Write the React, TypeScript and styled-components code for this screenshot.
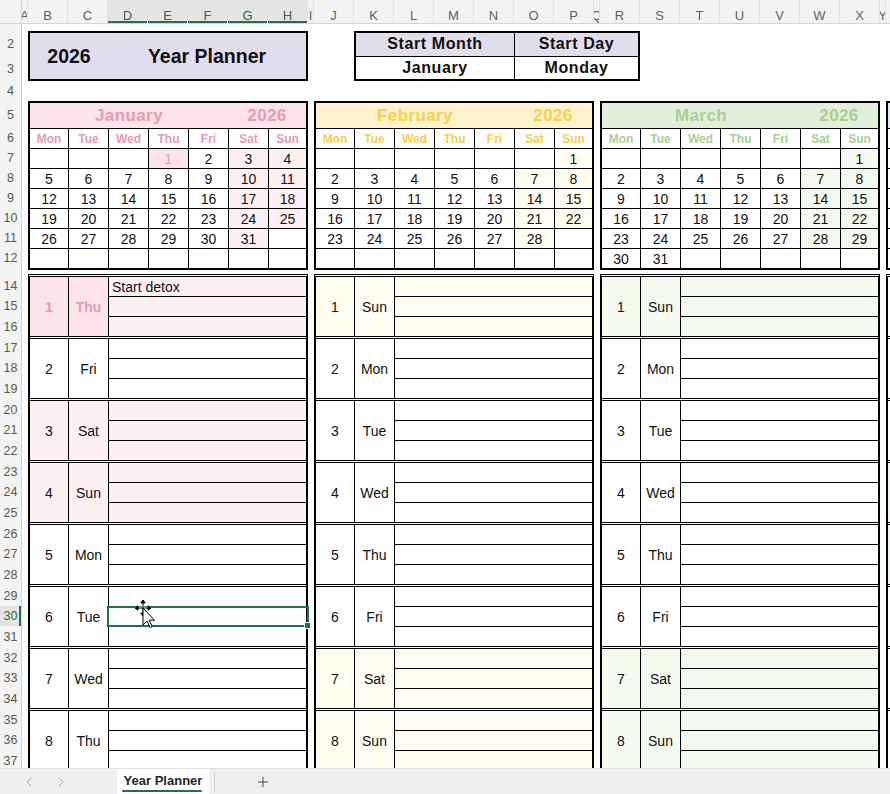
import React from 'react';
import styled, { createGlobalStyle, css } from 'styled-components';
import { ChevronLeft, ChevronRight, Plus } from 'lucide-react';

const GlobalStyle = createGlobalStyle`
  html, body { margin: 0; padding: 0; background: #fff; }
  body { font-family: 'Liberation Sans', Arial, sans-serif; }
  * { box-sizing: border-box; }
`;

type MonthTheme = { name: string; head: string; accent: string; tint: string };

const YEAR = 2026;
const MONTHS: MonthTheme[] = [
  { name: 'January', head: '#fce4ea', accent: '#e99aae', tint: '#fdf0f3' },
  { name: 'February', head: '#fff2cc', accent: '#f4d04e', tint: '#fffdf0' },
  { name: 'March', head: '#e2efda', accent: '#a9d08e', tint: '#f4faf0' },
  { name: 'April', head: '#ddebf7', accent: '#9bc2e6', tint: '#eff5fb' },
];
const DAY_NAMES = ['Mon', 'Tue', 'Wed', 'Thu', 'Fri', 'Sat', 'Sun'];
const HOLIDAYS = ['0-1'];
const NOTES: Record<string, string> = { '0-1': 'Start detox' };
const SELECTED = { month: 0, day: 6, line: 1 };

const LETTERS = 'ABCDEFGHIJKLMNOPQRSTUVWXYZ'.split('');
const NARROW = ['A', 'I', 'Q', 'Y'];
const SELECTED_COLS = ['D', 'E', 'F', 'G', 'H'];

const ROWS: [number, number][] = [
  [1, 7], [2, 25], [3, 25], [4, 20], [5, 27], [6, 20],
  [7, 20], [8, 20], [9, 20], [10, 20], [11, 20], [12, 20], [13, 7],
];
for (let r = 14; r <= 38; r++) {
  const pos = (r - 14) % 3;
  ROWS.push([r, pos === 1 ? 20 : 21]);
}
const SELECTED_ROW = 30;

const firstWeekday = (m: number) => (new Date(YEAR, m, 1).getDay() + 6) % 7;
const daysIn = (m: number) => new Date(YEAR, m + 1, 0).getDate();
const isHoliday = (m: number, d: number) => HOLIDAYS.includes(`${m}-${d}`);

/* ---------- sheet chrome ---------- */

const Page = styled.div`
  width: 890px;
  height: 794px;
  display: flex;
  flex-direction: column;
  overflow: hidden;
  background: #fff;
`;

const Sheet = styled.div`
  flex: 1;
  min-height: 0;
  display: grid;
  grid-template-columns: 22px 1fr;
  grid-template-rows: 24px 1fr;
  overflow: hidden;
`;

const Corner = styled.div`
  background: #f3f3f3;
  border-right: 1px solid #d4d4d4;
  border-bottom: 1px solid #d4d4d4;
`;

const ColHeaderBar = styled.div`
  display: flex;
  overflow: hidden;
  background: #f3f3f3;
  border-bottom: 1px solid #d4d4d4;
`;

const ColHead = styled.div<{ $w: number; $sel: boolean }>`
  flex: none;
  width: ${(p) => p.$w}px;
  display: flex;
  align-items: center;
  justify-content: center;
  padding-top: 7px;
  overflow: hidden;
  white-space: nowrap;
  font-size: 13px;
  color: #616161;
  border-right: 1px solid #e2e2e2;
  ${(p) =>
    p.$sel &&
    css`
      background: #e4e4e4;
      color: #217346;
      box-shadow: inset 0 -2px 0 #217346;
    `}
`;

const RowHeaderBar = styled.div`
  display: flex;
  flex-direction: column;
  overflow: hidden;
  background: #f3f3f3;
  border-right: 1px solid #d4d4d4;
`;

const RowHead = styled.div<{ $h: number; $sel: boolean }>`
  flex: none;
  height: ${(p) => p.$h}px;
  display: flex;
  align-items: ${(p) => (p.$h < 10 ? 'flex-start' : 'center')};
  justify-content: center;
  overflow: hidden;
  font-size: 12.5px;
  color: #5a5a5a;
  ${(p) =>
    p.$h < 10 &&
    css`
      & > span {
        margin-top: -11px;
      }
    `}
  ${(p) =>
    p.$sel &&
    css`
      background: #e4e4e4;
      color: #217346;
      box-shadow: inset -2px 0 0 #217346;
    `}
`;

const Canvas = styled.div`
  min-width: 0;
  overflow: hidden;
  padding-left: 6px;
  display: flex;
  flex-direction: column;
`;

const Spacer = styled.div<{ $h: number }>`
  flex: none;
  height: ${(p) => p.$h}px;
`;

/* ---------- header boxes ---------- */

const TopRow = styled.div`
  flex: none;
  display: flex;
  height: 50px;
`;

const TitleBox = styled.div`
  width: 280px;
  border: 2px solid #000;
  background: #e1ddec;
  display: grid;
  grid-template-columns: 78px 1fr;
  align-items: center;
  text-align: center;
  font-size: 19.5px;
  font-weight: 700;
  color: #111;
`;

const StartTable = styled.div`
  margin-left: 46px;
  width: 286px;
  border: 2px solid #000;
  background: #000;
  display: grid;
  grid-template-columns: 158px 1fr;
  grid-template-rows: 1fr 1fr;
  gap: 1px;
`;

const StartCell = styled.div<{ $head?: boolean }>`
  background: ${(p) => (p.$head ? '#e1ddec' : '#fff')};
  display: flex;
  align-items: center;
  justify-content: center;
  font-size: 16px;
  font-weight: 700;
  letter-spacing: 0.6px;
  color: #111;
`;

/* ---------- month calendars ---------- */

const MonthRow = styled.div`
  flex: none;
  display: flex;
  gap: 6px;
`;

const CalGrid = styled.div`
  flex: none;
  width: 280px;
  border: 2px solid #000;
  background: #000;
  display: grid;
  grid-template-columns: 38px repeat(5, 39px) 1fr;
  grid-template-rows: 25px repeat(7, 19px);
  gap: 1px;
`;

const MonthHead = styled.div<{ $bg: string; $fg: string }>`
  grid-column: 1 / -1;
  background: ${(p) => p.$bg};
  color: ${(p) => p.$fg};
  display: grid;
  grid-template-columns: 198px 1fr;
  align-items: center;
  text-align: center;
  font-size: 17px;
  font-weight: 700;
  letter-spacing: 0.4px;
`;

const DayName = styled.div<{ $fg: string }>`
  background: #fff;
  color: ${(p) => p.$fg};
  display: flex;
  align-items: center;
  justify-content: center;
  font-size: 12px;
  font-weight: 700;
`;

const DateCell = styled.div<{ $bg: string; $fg: string }>`
  background: ${(p) => p.$bg};
  color: ${(p) => p.$fg};
  display: flex;
  align-items: center;
  justify-content: center;
  padding-top: 1px;
  font-size: 14px;
`;

/* ---------- daily blocks ---------- */

const DailyCol = styled.div`
  flex: none;
  width: 280px;
  border-left: 2px solid #000;
  border-right: 2px solid #000;
  border-top: 3px double #000;
`;

const DayBlock = styled.div`
  height: 62px;
  border-bottom: 3px double #000;
  background: #000;
  background-clip: content-box;
  display: grid;
  grid-template-columns: 38px 39px 1fr;
  grid-template-rows: repeat(3, 1fr);
  gap: 1px;
`;

const DayLabel = styled.div<{ $bg: string; $fg: string; $bold: boolean }>`
  grid-row: 1 / -1;
  background: ${(p) => p.$bg};
  color: ${(p) => p.$fg};
  font-weight: ${(p) => (p.$bold ? 700 : 400)};
  display: flex;
  align-items: center;
  justify-content: center;
  font-size: 14px;
`;

const NoteLine = styled.div<{ $bg: string; $sel: boolean }>`
  position: relative;
  background: ${(p) => p.$bg};
  display: flex;
  align-items: center;
  padding-left: 3px;
  font-size: 14px;
  color: #111;
  white-space: nowrap;
  ${(p) =>
    p.$sel &&
    css`
      &::after {
        content: '';
        position: absolute;
        inset: -1px -3px -1px -2px;
        border: 2px solid #217346;
      }
      &::before {
        content: '';
        position: absolute;
        right: -5px;
        bottom: -3px;
        width: 5px;
        height: 5px;
        background: #217346;
        border: 1px solid #fff;
        z-index: 2;
      }
    `}
`;

const CursorWrap = styled.div`
  position: absolute;
  left: 25px;
  top: -8px;
  width: 22px;
  height: 30px;
  z-index: 3;
  pointer-events: none;
`;

/* ---------- tab bar ---------- */

const TabBar = styled.div`
  flex: none;
  height: 26px;
  background: #efefef;
  border-top: 1px solid #e1e1e1;
  display: flex;
  align-items: stretch;
`;

const TabNav = styled.div`
  width: 117px;
  display: flex;
  align-items: center;
  padding-left: 21px;
  gap: 16px;
  color: #a8a8a8;
`;

const SheetTab = styled.div`
  width: 92px;
  background: #fff;
  display: flex;
  align-items: center;
  justify-content: center;
  position: relative;
  font-size: 13px;
  font-weight: 700;
  color: #262626;
  padding-bottom: 3px;

  &::after {
    content: '';
    position: absolute;
    left: 5px;
    right: 7px;
    bottom: 2px;
    height: 2px;
    border-radius: 1px;
    background: #217346;
  }
`;

const TabDivider = styled.div`
  width: 1px;
  margin: 3px 0 3px 5px;
  background: #cfcfcf;
`;

const AddTab = styled.div`
  width: 96px;
  display: flex;
  align-items: center;
  justify-content: center;
  color: #444;
`;

/* ---------- parts ---------- */

const MoveCursor = () => (
  <CursorWrap>
    <svg width="22" height="30" viewBox="0 0 22 30">
      <g stroke="#fff" strokeWidth="2.6" strokeLinecap="round">
        <path d="M9 2 V16 M2 9 H16" />
      </g>
      <g stroke="#000" strokeWidth="1" fill="#000">
        <path d="M9 2.5 V15.5 M2.5 9 H15.5" />
        <path d="M9 1 L6.8 4 H11.2 Z M9 17 L6.8 14 H11.2 Z M1 9 L4 6.8 V11.2 Z M17 9 L14 6.8 V11.2 Z" strokeLinejoin="round" />
      </g>
      <path
        d="M9 9 V26 L13 22 L16 28.5 L18.2 27.5 L15.2 21.2 L20.5 21.2 Z"
        fill="#fff"
        stroke="#000"
        strokeWidth="1"
        strokeLinejoin="round"
      />
    </svg>
  </CursorWrap>
);

const MonthCalendar = ({ m, theme }: { m: number; theme: MonthTheme }) => {
  const first = firstWeekday(m);
  const total = daysIn(m);
  const cells = Array.from({ length: 42 }, (_, i) => {
    const d = i - first + 1;
    return d >= 1 && d <= total ? d : null;
  });

  return (
    <CalGrid>
      <MonthHead $bg={theme.head} $fg={theme.accent}>
        <span>{theme.name}</span>
        <span>{YEAR}</span>
      </MonthHead>
      {DAY_NAMES.map((n) => (
        <DayName key={n} $fg={theme.accent}>
          {n}
        </DayName>
      ))}
      {cells.map((d, i) => {
        const weekend = i % 7 >= 5;
        const holiday = d !== null && isHoliday(m, d);
        const bg = holiday ? theme.head : d !== null && weekend ? theme.tint : '#fff';
        return (
          <DateCell key={i} $bg={bg} $fg={holiday ? theme.accent : '#111'}>
            {d}
          </DateCell>
        );
      })}
    </CalGrid>
  );
};

const DailyList = ({ m, theme }: { m: number; theme: MonthTheme }) => {
  const first = firstWeekday(m);
  const days = Array.from({ length: 8 }, (_, i) => i + 1);

  return (
    <DailyCol>
      {days.map((d) => {
        const wd = (first + d - 1) % 7;
        const holiday = isHoliday(m, d);
        const weekend = wd >= 5;
        const labelBg = holiday ? theme.head : weekend ? theme.tint : '#fff';
        const noteBg = holiday || weekend ? theme.tint : '#fff';
        const fg = holiday ? theme.accent : '#111';
        return (
          <DayBlock key={d}>
            <DayLabel $bg={labelBg} $fg={fg} $bold={holiday}>
              {d}
            </DayLabel>
            <DayLabel $bg={labelBg} $fg={fg} $bold={holiday}>
              {DAY_NAMES[wd]}
            </DayLabel>
            {[0, 1, 2].map((line) => {
              const sel = SELECTED.month === m && SELECTED.day === d && SELECTED.line === line;
              return (
                <NoteLine key={line} $bg={noteBg} $sel={sel}>
                  {line === 0 ? NOTES[`${m}-${d}`] : null}
                  {sel && <MoveCursor />}
                </NoteLine>
              );
            })}
          </DayBlock>
        );
      })}
    </DailyCol>
  );
};

export default function App() {
  return (
    <Page>
      <GlobalStyle />
      <Sheet>
        <Corner />
        <ColHeaderBar>
          {LETTERS.map((l) => (
            <ColHead key={l} $w={NARROW.includes(l) ? 6 : 40} $sel={SELECTED_COLS.includes(l)}>
              {l}
            </ColHead>
          ))}
        </ColHeaderBar>
        <RowHeaderBar>
          {ROWS.map(([n, h]) => (
            <RowHead key={n} $h={h} $sel={n === SELECTED_ROW}>
              <span>{n}</span>
            </RowHead>
          ))}
        </RowHeaderBar>
        <Canvas>
          <Spacer $h={7} />
          <TopRow>
            <TitleBox>
              <span>{YEAR}</span>
              <span>Year Planner</span>
            </TitleBox>
            <StartTable>
              <StartCell $head>Start Month</StartCell>
              <StartCell $head>Start Day</StartCell>
              <StartCell>January</StartCell>
              <StartCell>Monday</StartCell>
            </StartTable>
          </TopRow>
          <Spacer $h={20} />
          <MonthRow>
            {MONTHS.map((t, m) => (
              <MonthCalendar key={t.name} m={m} theme={t} />
            ))}
          </MonthRow>
          <Spacer $h={4} />
          <MonthRow>
            {MONTHS.map((t, m) => (
              <DailyList key={t.name} m={m} theme={t} />
            ))}
          </MonthRow>
        </Canvas>
      </Sheet>
      <TabBar>
        <TabNav>
          <ChevronLeft size={16} strokeWidth={1.5} />
          <ChevronRight size={16} strokeWidth={1.5} />
        </TabNav>
        <SheetTab>Year Planner</SheetTab>
        <TabDivider />
        <AddTab>
          <Plus size={16} strokeWidth={1.4} />
        </AddTab>
      </TabBar>
    </Page>
  );
}
